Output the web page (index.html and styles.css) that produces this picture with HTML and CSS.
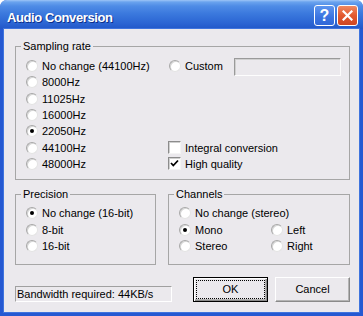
FILE: index.html
```html
<!DOCTYPE html>
<html>
<head>
	<title>Audio Conversion</title>
	<meta charset="UTF-8">
	<link rel="stylesheet" href="styles.css">
</head>
<body>
	<div class="window">
		<header class="titlebar">
			<span class="title">Audio Conversion</span>
			<div class="caption-buttons">
				<span class="cap-btn help">?</span>
				<span class="cap-btn close">
					<svg width="11" height="11" viewBox="0 0 11 11"><path d="M1.5 1.5 L9.5 9.5 M9.5 1.5 L1.5 9.5" stroke="#fff" stroke-width="2.2" stroke-linecap="square"/></svg>
				</span>
			</div>
		</header>
		<div class="content">
			<fieldset class="group sampling">
				<legend>Sampling rate</legend>
				<div class="sampling-grid">
					<div class="opt left"><span class="radio"></span>No change (44100Hz)</div>
					<div class="opt left"><span class="radio"></span>8000Hz</div>
					<div class="opt left"><span class="radio"></span>11025Hz</div>
					<div class="opt left"><span class="radio"></span>16000Hz</div>
					<div class="opt left"><span class="radio checked"></span>22050Hz</div>
					<div class="opt left"><span class="radio"></span>44100Hz</div>
					<div class="opt left"><span class="radio"></span>48000Hz</div>
					<div class="opt custom"><span class="radio"></span>Custom<span class="textbox"></span></div>
					<div class="opt integral"><span class="check"></span>Integral conversion</div>
					<div class="opt quality"><span class="check"><svg width="11" height="11" viewBox="0 0 11 11"><path d="M2 5 L4.3 7.5 L9 2.5" stroke="#000" stroke-width="1.8" fill="none"/></svg></span>High quality</div>
				</div>
			</fieldset>
			<div class="row">
				<fieldset class="group precision">
					<legend>Precision</legend>
					<div class="list">
						<div class="opt"><span class="radio checked"></span>No change (16-bit)</div>
						<div class="opt"><span class="radio"></span>8-bit</div>
						<div class="opt"><span class="radio"></span>16-bit</div>
					</div>
				</fieldset>
				<fieldset class="group channels">
					<legend>Channels</legend>
					<div class="channels-grid">
						<div class="opt wide"><span class="radio"></span>No change (stereo)</div>
						<div class="opt"><span class="radio checked"></span>Mono</div>
						<div class="opt"><span class="radio"></span>Left</div>
						<div class="opt"><span class="radio"></span>Stereo</div>
						<div class="opt"><span class="radio"></span>Right</div>
					</div>
				</fieldset>
			</div>
			<div class="footer">
				<div class="status">Bandwidth required: 44KB/s</div>
				<div class="btn default"><span class="btn-label">OK</span></div>
				<div class="btn"><span class="btn-label">Cancel</span></div>
			</div>
		</div>
	</div>
</body>
</html>
```

FILE: styles.css
```css
html, body {
	margin: 0;
	padding: 0;
}
body {
	width: 363px;
	height: 316px;
	overflow: hidden;
	font-family: "Liberation Sans", Arial, sans-serif;
	font-size: 11px;
	color: #000;
}
.window {
	display: flex;
	flex-direction: column;
	width: 363px;
	height: 316px;
	background-color: #2559d2;
	border-radius: 7px 7px 0 0;
	overflow: hidden;
}
.titlebar {
	display: flex;
	align-items: flex-start;
	height: 29px;
	flex-shrink: 0;
	padding: 0 5px 0 7px;
	background: linear-gradient(#9ec5f7 0, #6aa3ee 2px, #4f8ce6 6px, #3a78dd 14px, #2a63d2 24px, #2157c8 29px);
}
.title {
	margin-top: 10px;
	color: #fff;
	font-weight: bold;
	font-size: 13px;
	line-height: 15px;
	letter-spacing: -0.4px;
	text-shadow: 1px 1px 0 #0c2f8a;
}
.caption-buttons {
	display: flex;
	gap: 2px;
	margin-left: auto;
	margin-top: 5px;
}
.cap-btn {
	display: flex;
	align-items: center;
	justify-content: center;
	width: 21px;
	height: 21px;
	box-sizing: border-box;
	border: 1px solid #fff;
	border-radius: 3px;
	color: #fff;
	font-weight: bold;
	font-size: 16px;
	line-height: 1;
}
.help {
	background: linear-gradient(#5d95ee, #3a73e0 60%, #3168d8);
}
.close {
	background: linear-gradient(#f08a62, #e2592f 50%, #cf4622);
}
.content {
	flex-grow: 1;
	margin: 0 4px 4px;
	padding: 11px 9px 0 11px;
	background-color: #ebe9ed;
	box-shadow: 0 0 0 1px #3f74de;
}
.group {
	margin: 0;
	padding: 0;
	min-width: 0;
	border: 1px solid #a6a6a6;
}
.group legend {
	margin-left: 5px;
	padding: 0 2px;
	line-height: 13px;
}
.opt {
	display: flex;
	align-items: center;
	gap: 4px;
	height: 16.3px;
	white-space: nowrap;
}
.radio {
	position: relative;
	width: 12px;
	height: 12px;
	box-sizing: border-box;
	flex-shrink: 0;
	border-radius: 50%;
	background-color: #fff;
	border: 1px solid;
	border-color: #a8a8a8 #e4e4e4 #e4e4e4 #a8a8a8;
	box-shadow: inset 1px 1px 0 #d6d6d6;
}
.radio.checked::after {
	content: "";
	position: absolute;
	left: 3px;
	top: 3px;
	width: 4px;
	height: 4px;
	border-radius: 50%;
	background-color: #000;
}
.check {
	display: flex;
	align-items: center;
	justify-content: center;
	width: 13px;
	height: 13px;
	box-sizing: border-box;
	flex-shrink: 0;
	background-color: #fff;
	border: 1px solid;
	border-color: #8c8c8c #f4f4f4 #f4f4f4 #8c8c8c;
	box-shadow: inset 1px 1px 0 #cfcfcf;
}
.sampling-grid {
	display: grid;
	grid-template-columns: 142px 173px;
	grid-template-rows: repeat(7, 16.3px);
	padding: 5px 0 7px 10px;
}
.sampling-grid .left {
	grid-column: 1;
}
.custom {
	grid-column: 2;
	grid-row: 1;
}
.custom .radio {
	margin-left: 1px;
}
.integral {
	grid-column: 2;
	grid-row: 6;
}
.quality {
	grid-column: 2;
	grid-row: 7;
}
.textbox {
	align-self: flex-start;
	margin-left: auto;
	width: 107px;
	height: 18px;
	box-sizing: border-box;
	border: 1px solid;
	border-color: #9a9a9a #fdfdfd #fdfdfd #9a9a9a;
	box-shadow: inset 1px 1px 0 #d0d0d0;
}
.row {
	display: flex;
	gap: 12px;
	margin-top: 8px;
}
.precision {
	width: 141px;
	box-sizing: border-box;
}
.channels {
	width: 182px;
	box-sizing: border-box;
}
.list {
	padding: 4px 0 10px 10px;
}
.channels-grid {
	display: grid;
	grid-template-columns: 92px 1fr;
	grid-template-rows: repeat(3, 16.3px);
	padding: 4px 0 10px 10px;
}
.channels-grid .wide {
	grid-column: 1 / span 2;
}
.footer {
	display: flex;
	align-items: flex-start;
	margin-top: 12px;
}
.status {
	width: 157px;
	height: 16px;
	box-sizing: border-box;
	margin-top: 9px;
	padding-left: 1px;
	line-height: 14px;
	border: 1px solid;
	border-color: #a0a0a0 #fff #fff #a0a0a0;
}
.btn {
	display: flex;
	width: 75px;
	height: 25px;
	box-sizing: border-box;
	margin-left: 7px;
	border: 1px solid;
	border-color: #fff #8a8a8a #8a8a8a #fff;
	box-shadow: inset -1px -1px 0 #b4b4b4;
}
.btn.default {
	margin-left: 21px;
	border-color: #000;
	box-shadow: inset 1px 1px 0 #fff, inset -1px -1px 0 #8a8a8a, inset -2px -2px 0 #b4b4b4;
}
.btn-label {
	display: flex;
	align-items: center;
	justify-content: center;
	flex-grow: 1;
	margin: 2px;
	border: 1px dotted transparent;
}
.default .btn-label {
	border-color: #000;
}
```
